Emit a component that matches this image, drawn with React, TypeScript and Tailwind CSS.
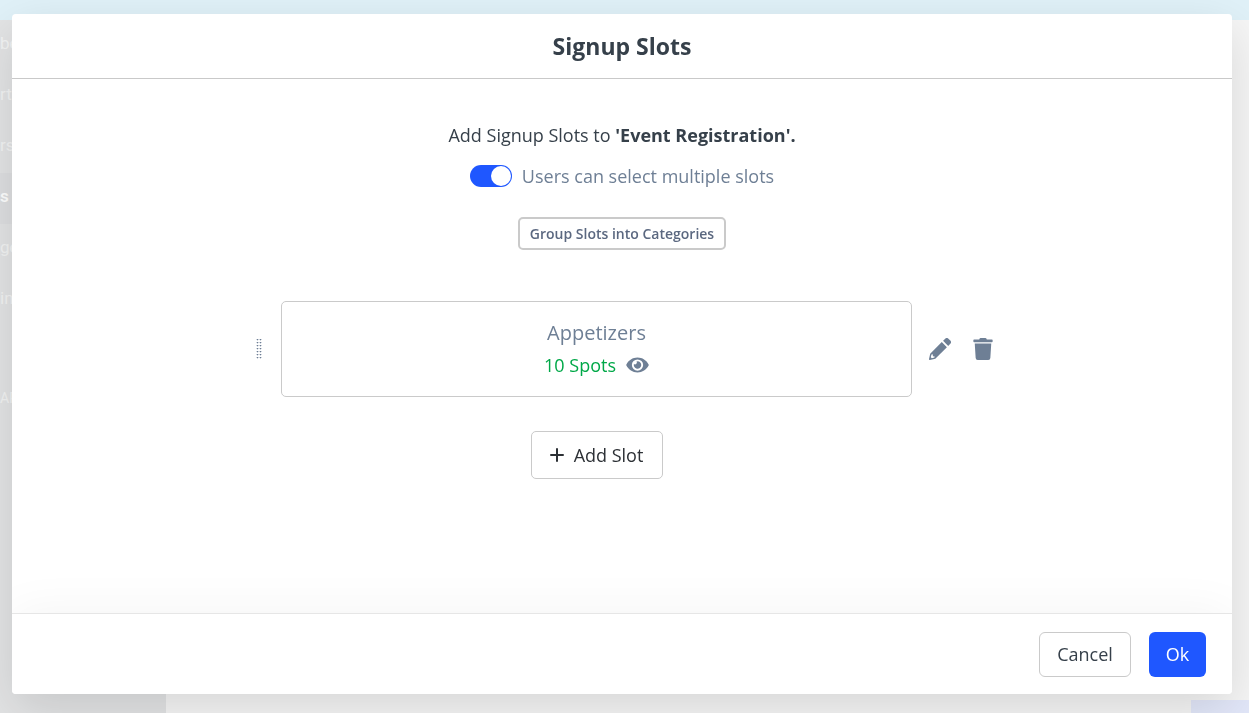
import { useState } from "react";
import { FaEye, FaTrash } from "react-icons/fa";

type Slot = { id: number; name: string; spots: number };
type NavItem = { label: string; active?: boolean };

const NAV_ITEMS: NavItem[] = [
  { label: "be" },
  { label: "rt" },
  { label: "rs" },
  { label: "s", active: true },
  { label: "ge" },
  { label: "in" },
];

const INITIAL_SLOTS: Slot[] = [{ id: 1, name: "Appetizers", spots: 10 }];

const GRIP_ROWS = [0, 3, 6, 9, 12, 15, 18];

function GripIcon() {
  return (
    <svg width="6" height="20" viewBox="0 0 6 20" fill="#6e7f95" shapeRendering="crispEdges" aria-hidden="true">
      {GRIP_ROWS.map((y) => (
        <g key={y}>
          <rect x="1" y={y} width="1" height="1" />
          <rect x="4" y={y} width="1" height="1" />
          <rect x="0" y={y} width="6" height="1" opacity="0.3" />
          <rect x="1" y={y + 1} width="1" height="1" opacity="0.3" />
          <rect x="4" y={y + 1} width="1" height="1" opacity="0.3" />
        </g>
      ))}
    </svg>
  );
}

function PencilIcon() {
  return (
    <svg width="22" height="22" viewBox="0 0 22 22" fill="currentColor" aria-hidden="true">
      <path d="M14.1 2.8 16.2.7a2.3 2.3 0 0 1 3.2 0l1.9 1.9a2.3 2.3 0 0 1 0 3.2l-2.1 2.1z" />
      <path
        fillRule="evenodd"
        d="M12.8 4.1 17.9 9.2 6.3 20.8.9 21.9a.8.8 0 0 1-.9-.9L1.2 15.7zM2.5 16.6 1.8 19.3 2.8 20.3 5.4 19.6 5.7 18.4 3.9 18.2 3.7 16.3z"
      />
    </svg>
  );
}

function PlusIcon() {
  return (
    <svg width="14" height="14" viewBox="0 0 14 14" fill="none" stroke="#2c3035" strokeWidth="2" strokeLinecap="round" aria-hidden="true">
      <path d="M7 1v12M1 7h12" />
    </svg>
  );
}

function PageBackdrop() {
  return (
    <div className="flex min-h-screen flex-col font-[Roboto,sans-serif]" aria-hidden="true">
      <div className="h-5 bg-[#e0f1f8]" />
      <div className="flex flex-1">
        <div className="flex w-[166px] flex-col bg-[#e3e4e5]">
          {NAV_ITEMS.map((item) => (
            <div
              key={item.label}
              className={`flex h-[51px] items-center pb-1 text-[17px] ${item.active ? "bg-[#dedfe1] font-semibold text-white" : "text-[#f3f4f4]"}`}
            >
              {item.label}
            </div>
          ))}
          <div className="pt-[62px] text-sm text-[#f3f4f4]">APS</div>
        </div>
        <div className="flex flex-1 items-end justify-end bg-[#f6f6f6]">
          <div className="h-[13px] w-[58px] bg-[#e3e8fa]" />
        </div>
      </div>
    </div>
  );
}

function SlotRow({ slot, onDelete }: { slot: Slot; onDelete: () => void }) {
  return (
    <div className="grid grid-cols-[30px_1fr_81px] items-center">
      <button type="button" aria-label="Reorder slot" className="w-fit cursor-grab pl-[5px]">
        <GripIcon />
      </button>
      <div className="flex h-24 flex-col items-center justify-center rounded-[5px] border border-[#cacaca]">
        <div className="text-xl leading-8 text-[#6e7f95]">{slot.name}</div>
        <div className="flex items-center gap-2.5 text-lg leading-8 text-[#00a848]">
          {slot.spots} Spots
          <button type="button" aria-label="Toggle visibility" className="text-[#6e7f95]">
            <FaEye size={20} className="w-[23px]" />
          </button>
        </div>
      </div>
      <div className="flex items-center justify-between pl-[17px] text-[#6e7f95]">
        <button type="button" aria-label="Edit slot">
          <PencilIcon />
        </button>
        <button type="button" aria-label="Delete slot" onClick={onDelete}>
          <FaTrash size={22} className="w-5" />
        </button>
      </div>
    </div>
  );
}

export default function App() {
  const [multiple, setMultiple] = useState(true);
  const [slots, setSlots] = useState<Slot[]>(INITIAL_SLOTS);

  const addSlot = () => setSlots((prev) => [...prev, { id: Date.now(), name: "New Slot", spots: 1 }]);
  const removeSlot = (id: number) => setSlots((prev) => prev.filter((s) => s.id !== id));

  return (
    <div className="overflow-hidden font-['Open_Sans',sans-serif] text-[#36404a]">
      <PageBackdrop />
      <div className="fixed inset-0 flex pt-[14px] pr-[17px] pb-[19px] pl-3">
        <div
          role="dialog"
          aria-labelledby="dialog-title"
          className="flex flex-1 flex-col overflow-hidden rounded bg-white shadow-[0_16px_50px_rgba(0,0,0,0.13)]"
        >
          <header className="flex h-[65px] shrink-0 items-center justify-center border-b border-[#c9c9c9]">
            <h1 id="dialog-title" className="text-[23px] leading-8 font-bold">Signup Slots</h1>
          </header>

          <main className="flex flex-1 flex-col items-center overflow-auto px-6 pt-11">
            <p className="text-lg leading-6">
              Add Signup Slots to <strong className="font-bold">'Event Registration'.</strong>
            </p>
            <label className="mt-[17px] flex items-center gap-2.5 text-lg leading-6 text-[#6e7f95]">
              <input
                type="checkbox"
                role="switch"
                checked={multiple}
                onChange={(e) => setMultiple(e.target.checked)}
                className="flex h-[22px] w-[42px] appearance-none items-center rounded-full bg-gray-300 p-px before:size-5 before:rounded-full before:bg-white checked:justify-end checked:bg-[#1f57ff]"
              />
              Users can select multiple slots
            </label>
            <button
              type="button"
              className="mt-[29px] h-[33px] rounded-[5px] border-2 border-[#cacaca] px-2.5 text-sm font-semibold text-[#5b6880]"
            >
              Group Slots into Categories
            </button>

            <div className="mt-[51px] w-full max-w-[742px]">
              {slots.map((slot) => (
                <SlotRow key={slot.id} slot={slot} onDelete={() => removeSlot(slot.id)} />
              ))}
              <div className="mt-[34px] flex justify-center pr-[81px] pl-[30px]">
                <button
                  type="button"
                  onClick={addSlot}
                  className="flex h-12 w-[132px] items-center justify-center gap-2.5 rounded-[5px] border border-[#cacaca] text-lg text-[#2c3035]"
                >
                  <PlusIcon />
                  Add Slot
                </button>
              </div>
            </div>
          </main>

          <footer className="flex h-[81px] shrink-0 items-center justify-end gap-[18px] border-t border-[#e6e6e6] bg-white px-[26px] shadow-[0_0_50px_rgba(0,0,0,0.05)]">
            <button type="button" className="h-[45px] w-[92px] rounded-md border border-[#cacaca] text-lg">
              Cancel
            </button>
            <button type="button" className="h-[45px] w-[57px] rounded-md bg-[#1f57ff] text-lg text-white">
              Ok
            </button>
          </footer>
        </div>
      </div>
    </div>
  );
}
